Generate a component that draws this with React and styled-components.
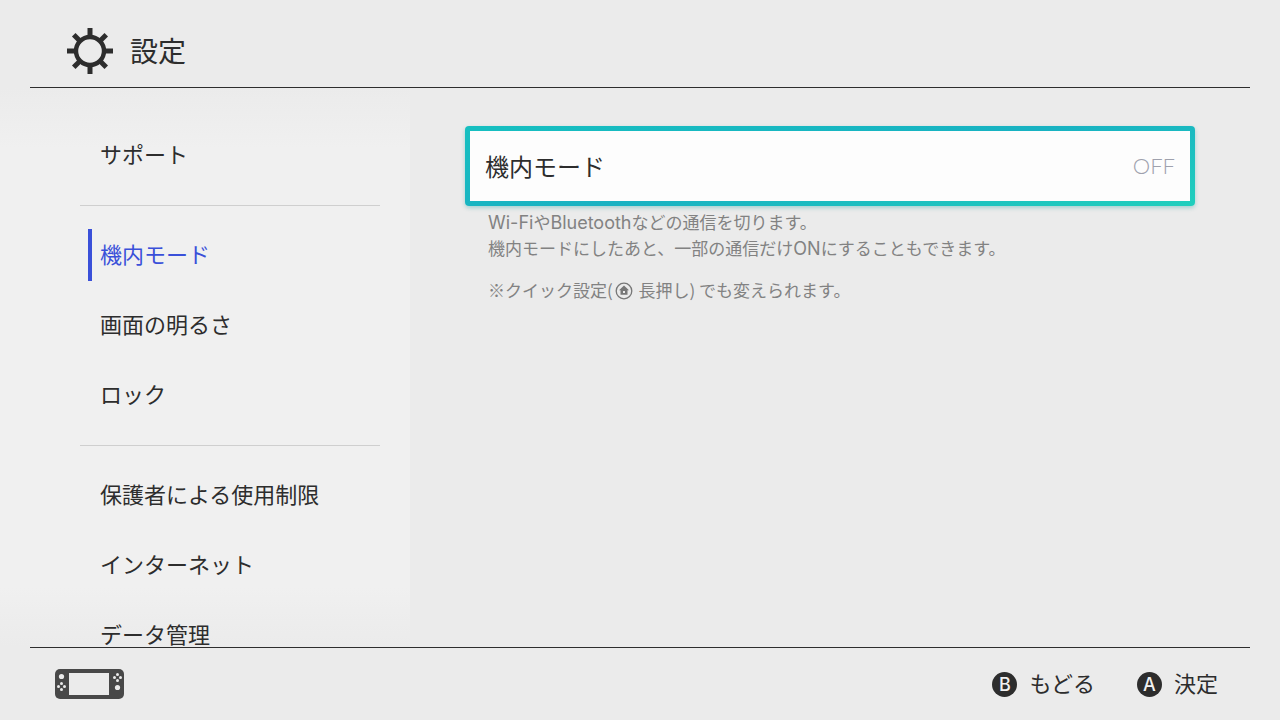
import React from "react";
import styled, { createGlobalStyle } from "styled-components";

const cjk = `"Noto Sans CJK JP", sans-serif`;

const GlobalStyle = createGlobalStyle`
  * { box-sizing: border-box; }
  body {
    margin: 0;
    background: #ebebeb;
    color: #2d2d2d;
    font-family: ${cjk};
  }
  button { font: inherit; color: inherit; border: 0; background: none; padding: 0; cursor: pointer; }
`;

const Screen = styled.div`
  display: flex;
  flex-direction: column;
  height: 100vh;
  overflow: hidden;
`;

const Header = styled.header`
  flex: none;
  display: flex;
  align-items: center;
  gap: 16px;
  height: 88px;
  margin: 0 30px;
  padding: 14px 36px 0;
  border-bottom: 1px solid #2d2d2d;
`;

const Title = styled.h1`
  margin: 0;
  padding-bottom: 2px;
  font-size: 28px;
  line-height: 40px;
  font-weight: 400;
`;

const Body = styled.div`
  flex: 1;
  min-height: 0;
  display: flex;
`;

const Sidebar = styled.nav`
  flex: none;
  width: 410px;
  padding: 32px 30px 0 80px;
  overflow: hidden;
  background: linear-gradient(#ebebeb, #f0f0f0 60px, #f0f0f0 calc(100% - 60px), #ebebeb);
`;

const Divider = styled.hr`
  height: 1px;
  margin: 15px 0 14px;
  border: 0;
  background: #cfcfcf;
`;

const MenuItem = styled.button`
  display: flex;
  align-items: center;
  width: 100%;
  height: 70px;
  padding-left: 8px;
  font-size: 22px;
  line-height: 48px;
  text-align: left;
  color: ${(p) => (p.$active ? "#3a50d9" : "#2d2d2d")};
`;

const MenuLabel = styled.span`
  padding: 0 0 4px 8px;
  border-left: 4px solid ${(p) => (p.$active ? "#3a50d9" : "transparent")};
`;

const Content = styled.main`
  flex: 1;
  min-width: 0;
  padding: 38px 85px 0 55px;
`;

const SettingRow = styled.button`
  display: flex;
  align-items: center;
  justify-content: space-between;
  width: 100%;
  height: 80px;
  padding: 0 15px;
  border: 5px solid transparent;
  border-radius: 4px;
  background:
    linear-gradient(#fdfdfd, #fdfdfd) padding-box,
    linear-gradient(170deg, #16bfc0, #18b2c2 50%, #20cfbd) border-box;
  box-shadow: 0 2px 4px rgba(0, 150, 150, 0.3);
  font-size: 24px;
  line-height: 36px;
`;

const Value = styled.span`
  font-family: Lato, ${cjk};
  font-size: 22px;
  font-weight: 300;
  color: #9fa1ad;
`;

const Description = styled.div`
  margin-top: 3px;
  padding-left: 23px;
  font-size: 17px;
  line-height: 26px;
  color: #828282;
`;

const Paragraph = styled.p`
  margin: 0 0 16px;
`;

const Latin = styled.span`
  font-family: Inter, ${cjk};
  font-size: 18px;
  font-weight: 400;
  line-height: 1;
`;

const HomeGlyph = styled.svg`
  width: 18px;
  height: 18px;
  margin: 0 2px;
  vertical-align: -3px;
`;

const Footer = styled.footer`
  flex: none;
  display: flex;
  align-items: center;
  justify-content: space-between;
  height: 73px;
  margin: 0 30px;
  padding: 0 32px 0 25px;
  border-top: 1px solid #2d2d2d;
`;

const Actions = styled.div`
  display: flex;
  gap: 42px;
`;

const Action = styled.button`
  display: flex;
  align-items: center;
  gap: 12px;
`;

const ActionLabel = styled.span`
  padding-bottom: 4px;
  font-size: 22px;
  line-height: 32px;
`;

const Key = styled.span`
  width: 25px;
  height: 25px;
  border-radius: 50%;
  background: #2d2d2d;
  color: #f2f2f2;
  font: 500 18px/25px Inter, sans-serif;
  text-align: center;
`;

function GearIcon() {
  return (
    <svg width="48" height="48" viewBox="0 0 48 48" fill="none" stroke="#2d2d2d" aria-hidden="true">
      <circle cx="24" cy="24" r="14" strokeWidth="4.400" />
      {[0, 45, 90, 135, 180, 225, 270, 315].map((a) => (
        <path key={a} d="M24 1v8.500" strokeWidth="5" transform={`rotate(${a} 24 24)`} />
      ))}
    </svg>
  );
}

function ConsoleIcon() {
  return (
    <svg width="69" height="30" viewBox="0 0 69 30" role="img" aria-label="Console">
      <rect width="69" height="30" rx="5" fill="#484848" />
      <g fill="#ebebeb">
        <path d="M14 4h40v22H14z" />
        <circle cx="6.500" cy="7.500" r="2.600" />
        <circle cx="6.500" cy="14.500" r="1.500" />
        <circle cx="6.500" cy="20.500" r="1.500" />
        <circle cx="3.500" cy="17.500" r="1.500" />
        <circle cx="9.500" cy="17.500" r="1.500" />
        <circle cx="62.500" cy="5.500" r="1.500" />
        <circle cx="62.500" cy="11.500" r="1.500" />
        <circle cx="59.500" cy="8.500" r="1.500" />
        <circle cx="65.500" cy="8.500" r="1.500" />
        <circle cx="62.500" cy="18.500" r="2.600" />
      </g>
    </svg>
  );
}

const groups = [
  ["サポート"],
  ["機内モード", "画面の明るさ", "ロック"],
  ["保護者による使用制限", "インターネット", "データ管理"],
];

export default function App() {
  const active = "機内モード";
  return (
    <Screen lang="ja">
      <GlobalStyle />
      <Header>
        <GearIcon />
        <Title>設定</Title>
      </Header>
      <Body>
        <Sidebar>
          {groups.map((items, i) => (
            <React.Fragment key={i}>
              {i > 0 && <Divider />}
              {items.map((label) => (
                <MenuItem key={label} $active={label === active}>
                  <MenuLabel $active={label === active}>{label}</MenuLabel>
                </MenuItem>
              ))}
            </React.Fragment>
          ))}
        </Sidebar>
        <Content>
          <SettingRow>
            <span>機内モード</span>
            <Value>OFF</Value>
          </SettingRow>
          <Description>
            <Paragraph>
              <Latin>Wi-Fi</Latin>や<Latin>Bluetooth</Latin>などの通信を切ります。
              <br />
              機内モードにしたあと、一部の通信だけ<Latin>ON</Latin>にすることもできます。
            </Paragraph>
            <Paragraph>
              ※クイック設定(
              <HomeGlyph viewBox="0 0 18 18" aria-hidden="true">
                <circle cx="9" cy="9" r="7.800" fill="none" stroke="#777" strokeWidth="1.300" />
                <path d="M9 3.600l5 4.700h-1.500v4.500h-7V8.300H4z" fill="#777" />
                <path d="M8 9h2v2H8z" fill="#ebebeb" />
              </HomeGlyph>{" "}
              長押し) でも変えられます。
            </Paragraph>
          </Description>
        </Content>
      </Body>
      <Footer>
        <ConsoleIcon />
        <Actions>
          <Action>
            <Key>B</Key>
            <ActionLabel>もどる</ActionLabel>
          </Action>
          <Action>
            <Key>A</Key>
            <ActionLabel>決定</ActionLabel>
          </Action>
        </Actions>
      </Footer>
    </Screen>
  );
}
